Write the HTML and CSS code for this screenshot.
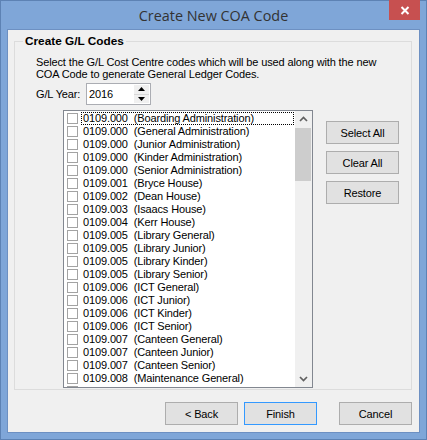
FILE: index.html
```html
<!DOCTYPE html>
<html>
<head>
<meta charset="utf-8">
<link rel="stylesheet" href="styles.css">
</head>
<body>
<div class="window">
  <div class="titlebar">
    <div class="title">Create New COA Code</div>
    <div class="close">
      <svg width="10" height="9" viewBox="0 0 10 9"><path d="M1.5 1 L8.5 8 M8.5 1 L1.5 8" stroke="#fff" stroke-width="2"/></svg>
    </div>
  </div>
  <div class="client">
    <fieldset class="group">
      <legend>Create G/L Codes</legend>
      <p class="desc">Select the G/L Cost Centre codes which will be used along with the new<br>COA Code to generate General Ledger Codes.</p>
      <div class="year-row">
        <span class="year-label">G/L Year:</span>
        <div class="spinner">
          <span class="spin-value">2016</span>
          <div class="spin-buttons">
            <div class="spin-btn"><svg width="7" height="4" viewBox="0 0 7 4"><path d="M0 4 L3.5 0 L7 4Z" fill="#000"/></svg></div>
            <div class="spin-btn"><svg width="7" height="4" viewBox="0 0 7 4"><path d="M0 0 L3.5 4 L7 0Z" fill="#000"/></svg></div>
          </div>
        </div>
      </div>
      <div class="main-row">
        <div class="list">
          <div class="items">
            <div class="item"><span class="cb"></span><span class="lbl focus">0109.000  (Boarding Administration)</span></div>
            <div class="item"><span class="cb"></span><span class="lbl">0109.000  (General Administration)</span></div>
            <div class="item"><span class="cb"></span><span class="lbl">0109.000  (Junior Administration)</span></div>
            <div class="item"><span class="cb"></span><span class="lbl">0109.000  (Kinder Administration)</span></div>
            <div class="item"><span class="cb"></span><span class="lbl">0109.000  (Senior Administration)</span></div>
            <div class="item"><span class="cb"></span><span class="lbl">0109.001  (Bryce House)</span></div>
            <div class="item"><span class="cb"></span><span class="lbl">0109.002  (Dean House)</span></div>
            <div class="item"><span class="cb"></span><span class="lbl">0109.003  (Isaacs House)</span></div>
            <div class="item"><span class="cb"></span><span class="lbl">0109.004  (Kerr House)</span></div>
            <div class="item"><span class="cb"></span><span class="lbl">0109.005  (Library General)</span></div>
            <div class="item"><span class="cb"></span><span class="lbl">0109.005  (Library Junior)</span></div>
            <div class="item"><span class="cb"></span><span class="lbl">0109.005  (Library Kinder)</span></div>
            <div class="item"><span class="cb"></span><span class="lbl">0109.005  (Library Senior)</span></div>
            <div class="item"><span class="cb"></span><span class="lbl">0109.006  (ICT General)</span></div>
            <div class="item"><span class="cb"></span><span class="lbl">0109.006  (ICT Junior)</span></div>
            <div class="item"><span class="cb"></span><span class="lbl">0109.006  (ICT Kinder)</span></div>
            <div class="item"><span class="cb"></span><span class="lbl">0109.006  (ICT Senior)</span></div>
            <div class="item"><span class="cb"></span><span class="lbl">0109.007  (Canteen General)</span></div>
            <div class="item"><span class="cb"></span><span class="lbl">0109.007  (Canteen Junior)</span></div>
            <div class="item"><span class="cb"></span><span class="lbl">0109.007  (Canteen Senior)</span></div>
            <div class="item"><span class="cb"></span><span class="lbl">0109.008  (Maintenance General)</span></div>
            <div class="item"><span class="cb"></span><span class="lbl"></span></div>
          </div>
          <div class="vscroll">
            <div class="sb-arrow"><svg width="17" height="17" viewBox="0 0 17 17"><path d="M5 10 L8.5 6.5 L12 10" fill="none" stroke="#606060" stroke-width="1.7"/></svg></div>
            <div class="sb-track"><div class="sb-thumb"></div></div>
            <div class="sb-arrow"><svg width="17" height="17" viewBox="0 0 17 17"><path d="M5 7 L8.5 10.5 L12 7" fill="none" stroke="#606060" stroke-width="1.7"/></svg></div>
          </div>
        </div>
        <div class="side-buttons">
          <button class="btn">Select All</button>
          <button class="btn">Clear All</button>
          <button class="btn">Restore</button>
        </div>
      </div>
    </fieldset>
    <div class="bottom-row">
      <button class="btn back">&lt; Back</button>
      <button class="btn default finish">Finish</button>
      <button class="btn">Cancel</button>
    </div>
  </div>
</div>
</body>
</html>
```

FILE: styles.css
```css
* { box-sizing: border-box; }
html, body { margin: 0; padding: 0; }
body {
  width: 427px;
  height: 440px;
  overflow: hidden;
  font-family: "Liberation Sans", Arial, sans-serif;
  font-size: 11px;
  letter-spacing: -0.13px;
  color: #000;
}
.window {
  width: 427px;
  height: 440px;
  background: #7fa6d8;
  border: 1px solid #5d82b4;
  padding: 0 6px 6px 6px;
  display: flex;
  flex-direction: column;
}
.titlebar {
  height: 28px;
  display: grid;
  grid-template-columns: 1fr auto 1fr;
}
.title {
  grid-column: 2;
  font-family: "Open Sans", "Noto Sans", sans-serif;
  font-size: 14.4px;
  letter-spacing: 0;
  color: #333;
  line-height: 29px;
  white-space: nowrap;
}
.close {
  grid-column: 3;
  justify-self: end;
  align-self: start;
  width: 31px;
  height: 20px;
  margin-top: -1px;
  background: #c75050;
  display: flex;
  align-items: center;
  justify-content: center;
}
.close svg { display: block; }
.client {
  flex: 1;
  background: #f0f0f0;
  border: 1px solid #6d90c2;
  display: flex;
  flex-direction: column;
}
.group {
  margin: 4px 7px 0 6px;
  padding: 0 0 1px 0;
  border: 1px solid #dcdcdc;
  min-inline-size: 0;
}
.group legend {
  margin-left: 8px;
  padding: 0 2px;
  font-weight: bold;
  font-size: 11.8px;
  letter-spacing: 0;
  line-height: 14px;
}
.desc {
  margin: 8px 0 0 21px;
  line-height: 12px;
  white-space: nowrap;
}
.year-row {
  margin: 3px 0 0 21px;
  display: flex;
  align-items: center;
  height: 22px;
}
.year-label {
  width: 50px;
}
.spinner {
  width: 65px;
  height: 22px;
  border: 1px solid #abadb3;
  background: #fff;
  display: flex;
}
.spin-value {
  flex: 1;
  padding-left: 2px;
  line-height: 20px;
}
.spin-buttons {
  width: 16px;
  display: flex;
  flex-direction: column;
  padding: 1px 1px 1px 0;
}
.spin-btn {
  flex: 1;
  background: #f0f0f0;
  display: flex;
  align-items: center;
  justify-content: center;
}
.spin-btn + .spin-btn { border-top: 1px solid #d8d8d8; }
.spin-btn svg { display: block; }
.main-row {
  margin: 5px 0 0 48px;
  display: flex;
  align-items: flex-start;
}
.list {
  width: 250px;
  height: 278px;
  border: 1px solid #828790;
  background: #fff;
  display: flex;
}
.items {
  flex: 1;
  overflow: hidden;
  padding-top: 1px;
}
.item {
  height: 13px;
  display: flex;
  align-items: center;
}
.cb {
  width: 11px;
  height: 11px;
  margin-left: 3px;
  border: 1px solid #a3a3a3;
  background: #fff;
  flex: none;
}
.lbl {
  flex: 1;
  margin: 0 1px 0 3px;
  padding-left: 1px;
  height: 13px;
  white-space: pre;
  border: 1px solid transparent;
  line-height: 11px;
}
.lbl.focus { border: 1px dotted #000; }
.vscroll {
  width: 17px;
  background: #f0f0f0;
  display: flex;
  flex-direction: column;
}
.sb-arrow { height: 17px; }
.sb-arrow svg { display: block; }
.sb-track { flex: 1; }
.sb-thumb {
  height: 53px;
  margin: 0 1px 0 0;
  background: #cdcdcd;
}
.side-buttons {
  margin: 11px 0 0 13px;
  display: flex;
  flex-direction: column;
  gap: 7px;
}
.btn {
  width: 73px;
  height: 23px;
  padding: 0;
  margin: 0;
  background: #e1e1e1;
  border: 1px solid #adadad;
  font-family: "Liberation Sans", Arial, sans-serif;
  font-size: 11px;
  letter-spacing: -0.13px;
  color: #000;
}
.btn.default { border-color: #3399ff; }
.bottom-row {
  margin: 12px 7px 0 0;
  display: flex;
  justify-content: flex-end;
}
.back { margin-right: 6px; }
.finish { margin-right: 22px; }
```
